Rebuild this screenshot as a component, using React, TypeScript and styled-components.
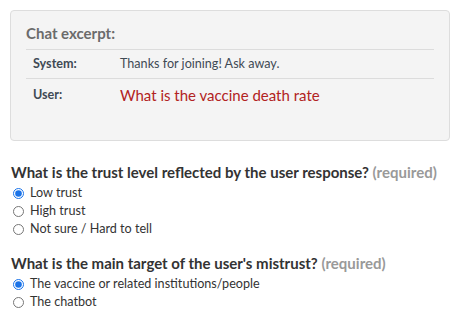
import styled, { createGlobalStyle } from 'styled-components';

const GlobalStyle = createGlobalStyle`
  body {
    margin: 0;
    background: #ffffff;
    font-family: Lato, "Noto Sans", sans-serif;
    color: #333333;
  }
`;

interface Option {
  label: string;
  checked?: boolean;
}

interface Question {
  name: string;
  prompt: string;
  options: Option[];
}

const questions: Question[] = [
  {
    name: 'trust',
    prompt: 'What is the trust level reflected by the user response?',
    options: [
      { label: 'Low trust', checked: true },
      { label: 'High trust' },
      { label: 'Not sure / Hard to tell' },
    ],
  },
  {
    name: 'target',
    prompt: "What is the main target of the user's mistrust?",
    options: [
      { label: 'The vaccine or related institutions/people', checked: true },
      { label: 'The chatbot' },
    ],
  },
];

const App = () => {
  return (
    <Page>
      <GlobalStyle />
      <ExcerptBox>
        <ExcerptTitle>Chat excerpt:</ExcerptTitle>
        <ChatTable>
          <tbody>
            <ChatRow>
              <Speaker>System:</Speaker>
              <Utterance>Thanks for joining! Ask away.</Utterance>
            </ChatRow>
            <ChatRow>
              <Speaker>User:</Speaker>
              <Utterance $highlight>What is the vaccine death rate</Utterance>
            </ChatRow>
          </tbody>
        </ChatTable>
      </ExcerptBox>

      {questions.map((q) => (
        <QuestionBlock key={q.name}>
          <Prompt>
            {q.prompt} <Required>(required)</Required>
          </Prompt>
          <OptionList>
            {q.options.map((o) => (
              <OptionLabel key={o.label}>
                <Radio type="radio" name={q.name} defaultChecked={o.checked} />
                {o.label}
              </OptionLabel>
            ))}
          </OptionList>
        </QuestionBlock>
      ))}
    </Page>
  );
};

export default App;

const Page = styled.div`
  padding: 10px 11px 0 10px;
`;

const ExcerptBox = styled.div`
  background-color: #f4f4f4;
  border: 1px solid #dddddd;
  border-radius: 4px;
  padding: 12px 15px 0 15px;
  height: 131px;
  box-sizing: border-box;
`;

const ExcerptTitle = styled.div`
  font-size: 15px;
  font-weight: 700;
  color: #6b6b6b;
  line-height: 20px;
  padding-bottom: 6px;
  border-bottom: 1px solid #dcdcdc;
`;

const ChatTable = styled.table`
  width: 100%;
  border-collapse: collapse;
`;

const ChatRow = styled.tr`
  & + & td {
    border-top: 1px solid #dcdcdc;
  }
`;

const Speaker = styled.td`
  width: 73px;
  padding: 6px 7px;
  font-size: 12.6px;
  font-weight: 700;
  color: #3f4a55;
  line-height: 16px;
  vertical-align: middle;
`;

const Utterance = styled.td<{ $highlight?: boolean }>`
  padding: 6px 7px;
  font-size: ${(p) => (p.$highlight ? '15px' : '12.6px')};
  color: ${(p) => (p.$highlight ? '#b22222' : '#3f4a55')};
  line-height: ${(p) => (p.$highlight ? '20px' : '16px')};
  vertical-align: middle;
`;

const QuestionBlock = styled.div`
  margin-top: 21px;
  padding-left: 1px;

  & + & {
    margin-top: 15px;
  }
`;

const Prompt = styled.div`
  font-size: 15px;
  font-weight: 700;
  color: #333333;
  line-height: 20px;
`;

const Required = styled.span`
  color: #999999;
`;

const OptionList = styled.div`
  display: flex;
  flex-direction: column;
  margin-top: 2px;
`;

const OptionLabel = styled.label`
  display: flex;
  align-items: center;
  gap: 6px;
  font-size: 12.6px;
  line-height: 18px;
  color: #333333;
`;

const Radio = styled.input`
  margin: 0 0 0 2px;
  width: 11px;
  height: 11px;
  accent-color: #1a73e8;
`;
